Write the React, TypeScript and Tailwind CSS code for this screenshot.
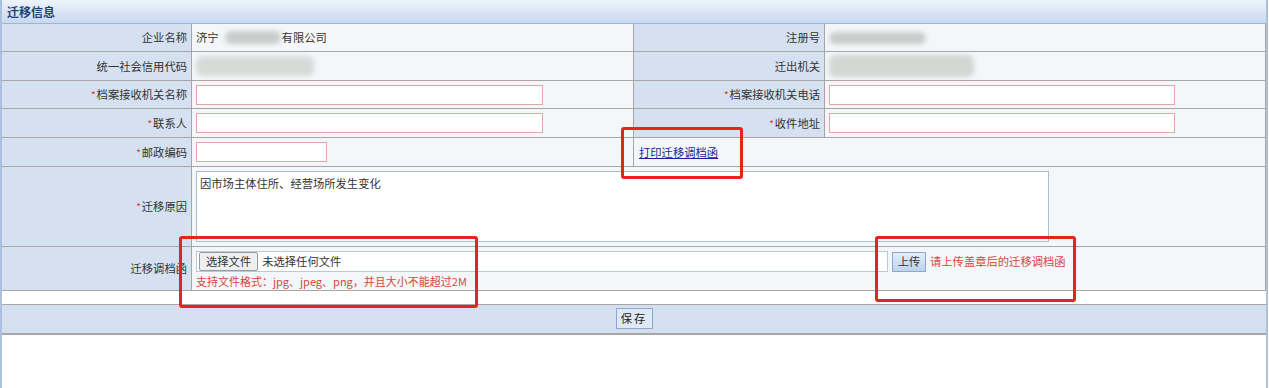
import React from "react";

const font = { fontFamily: '"Noto Sans CJK SC", "Liberation Sans", sans-serif' };

function Label({ children, req }: { children: React.ReactNode; req?: boolean }) {
  return (
    <div className="bg-[#d5e1f0] border-r border-b border-[#a6a6a6] flex items-center justify-end pr-[4px] text-[11.3px] text-[#333]">
      {req && <span className="text-[#e03030] text-[10px] mr-[1px]">*</span>}
      {children}
    </div>
  );
}

function Val({ children, className = "" }: { children?: React.ReactNode; className?: string }) {
  return (
    <div className={`bg-[#f4f7f9] border-r border-b border-[#a6a6a6] flex items-center pl-[4px] text-[11.3px] text-[#333] ${className}`}>
      {children}
    </div>
  );
}

function Blur({ w, h, className = "" }: { w: number; h: number; className?: string }) {
  return (
    <div
      className={`bg-[#c9ccca] blur-[2.5px] rounded-[6px] ${className}`}
      style={{ width: w, height: h }}
    />
  );
}

export default function App() {
  return (
    <div className="relative w-[1269px] h-[388px] bg-white overflow-hidden" style={font}>
      <div className="h-full border-l-2 border-r-[2px] border-[#a9c0de] mr-[1px] flex flex-col">
        {/* header */}
        <div className="h-[24px] bg-gradient-to-b from-[#eef3fb] to-[#c7d8ef] border-b border-[#9db4d6] flex items-center pl-[5px] text-[12px] font-bold text-[#1f3f7c]">
          迁移信息
        </div>
        <div className="grid grid-cols-[190px_442px_191px_1fr] grid-rows-[28.4px_28.4px_28.6px_28.6px_29.2px_80px_43.5px]">
          <Label>企业名称</Label>
          <Val>
            <span>济宁</span>
            <Blur w={56} h={13} className="ml-[6px] mr-[1px]" />
            <span>有限公司</span>
          </Val>
          <Label>注册号</Label>
          <Val>
            <Blur w={97} h={12} />
          </Val>

          <Label>统一社会信用代码</Label>
          <Val className="pl-[2px]">
            <Blur w={118} h={20} className="bg-[#d8dad8]" />
          </Val>
          <Label>迁出机关</Label>
          <Val>
            <Blur w={145} h={22} className="bg-[#d4d6d4]" />
          </Val>

          <Label req>档案接收机关名称</Label>
          <Val>
            <div className="w-[347px] h-[20px] bg-white border border-[#e2a6a3]" />
          </Val>
          <Label req>档案接收机关电话</Label>
          <Val>
            <div className="w-[346px] h-[20px] bg-white border border-[#e2a6a3]" />
          </Val>

          <Label req>联系人</Label>
          <Val>
            <div className="w-[347px] h-[20px] bg-white border border-[#e2a6a3]" />
          </Val>
          <Label req>收件地址</Label>
          <Val>
            <div className="w-[346px] h-[20px] bg-white border border-[#e2a6a3]" />
          </Val>

          <Label req>邮政编码</Label>
          <Val>
            <div className="w-[131px] h-[20px] bg-white border border-[#e2a6a3]" />
          </Val>
          <Val className="col-span-2 pl-[5px]">
            <span className="text-[#1c1ca0] underline">打印迁移调档函</span>
          </Val>

          <Label req>迁移原因</Label>
          <Val className="col-span-3 items-start pt-[4px]">
            <div className="w-[853px] h-[71px] bg-white border border-[#a9bfcf] px-[3px] pt-[3px] text-[11.3px] leading-[16px]">
              因市场主体住所、经营场所发生变化
            </div>
          </Val>

          <Label>迁移调档函</Label>
          <Val className="col-span-3 items-start pt-[4px]">
            <div className="flex flex-col">
              <div className="flex items-center">
                <div className="w-[692px] h-[21px] bg-white border border-[#b9cad6] flex items-center pl-[2px]">
                  <div className="h-[19px] px-[6px] bg-[#efefef] border border-[#9a9a9a] rounded-[2px] flex items-center text-[11.3px]">
                    选择文件
                  </div>
                  <span className="ml-[4px] text-[11.3px]">未选择任何文件</span>
                </div>
                <div className="ml-[4px] h-[20px] w-[34px] bg-gradient-to-b from-[#e4edf8] to-[#bfd3ec] border border-[#8ea8c9] flex items-center justify-center text-[11.3px]">
                  上传
                </div>
                <span className="ml-[4px] text-[11.3px] text-[#d8463c]">请上传盖章后的迁移调档函</span>
              </div>
              <div className="mt-[2px] text-[11px] text-[#d8463c] leading-[14px]">
                支持文件格式：jpg、jpeg、png，并且大小不能超过2M
              </div>
            </div>
          </Val>
        </div>
        <div className="h-[14px] bg-white border-b border-[#a6a6a6]" />
        <div className="h-[30px] bg-[#d4e0ef] border-b-2 border-[#a6a6a6] flex items-center justify-center">
          <div className="h-[21px] w-[37px] bg-[#dfe9f5] border border-[#8ea8c9] flex items-center justify-center text-[11.3px] tracking-[2px] text-[#222]">
            保存
          </div>
        </div>
        <div className="flex-1 bg-white" />
      </div>

      {/* annotation boxes */}
      <div className="absolute left-[621px] top-[127px] w-[122px] h-[52px] border-[3px] border-[#e8231d] rounded-[3px]" />
      <div className="absolute left-[179px] top-[236px] w-[299px] h-[72px] border-[3px] border-[#e8231d] rounded-[3px]" />
      <div className="absolute left-[875px] top-[236px] w-[201px] h-[66px] border-[3px] border-[#e8231d] rounded-[3px]" />
    </div>
  );
}
